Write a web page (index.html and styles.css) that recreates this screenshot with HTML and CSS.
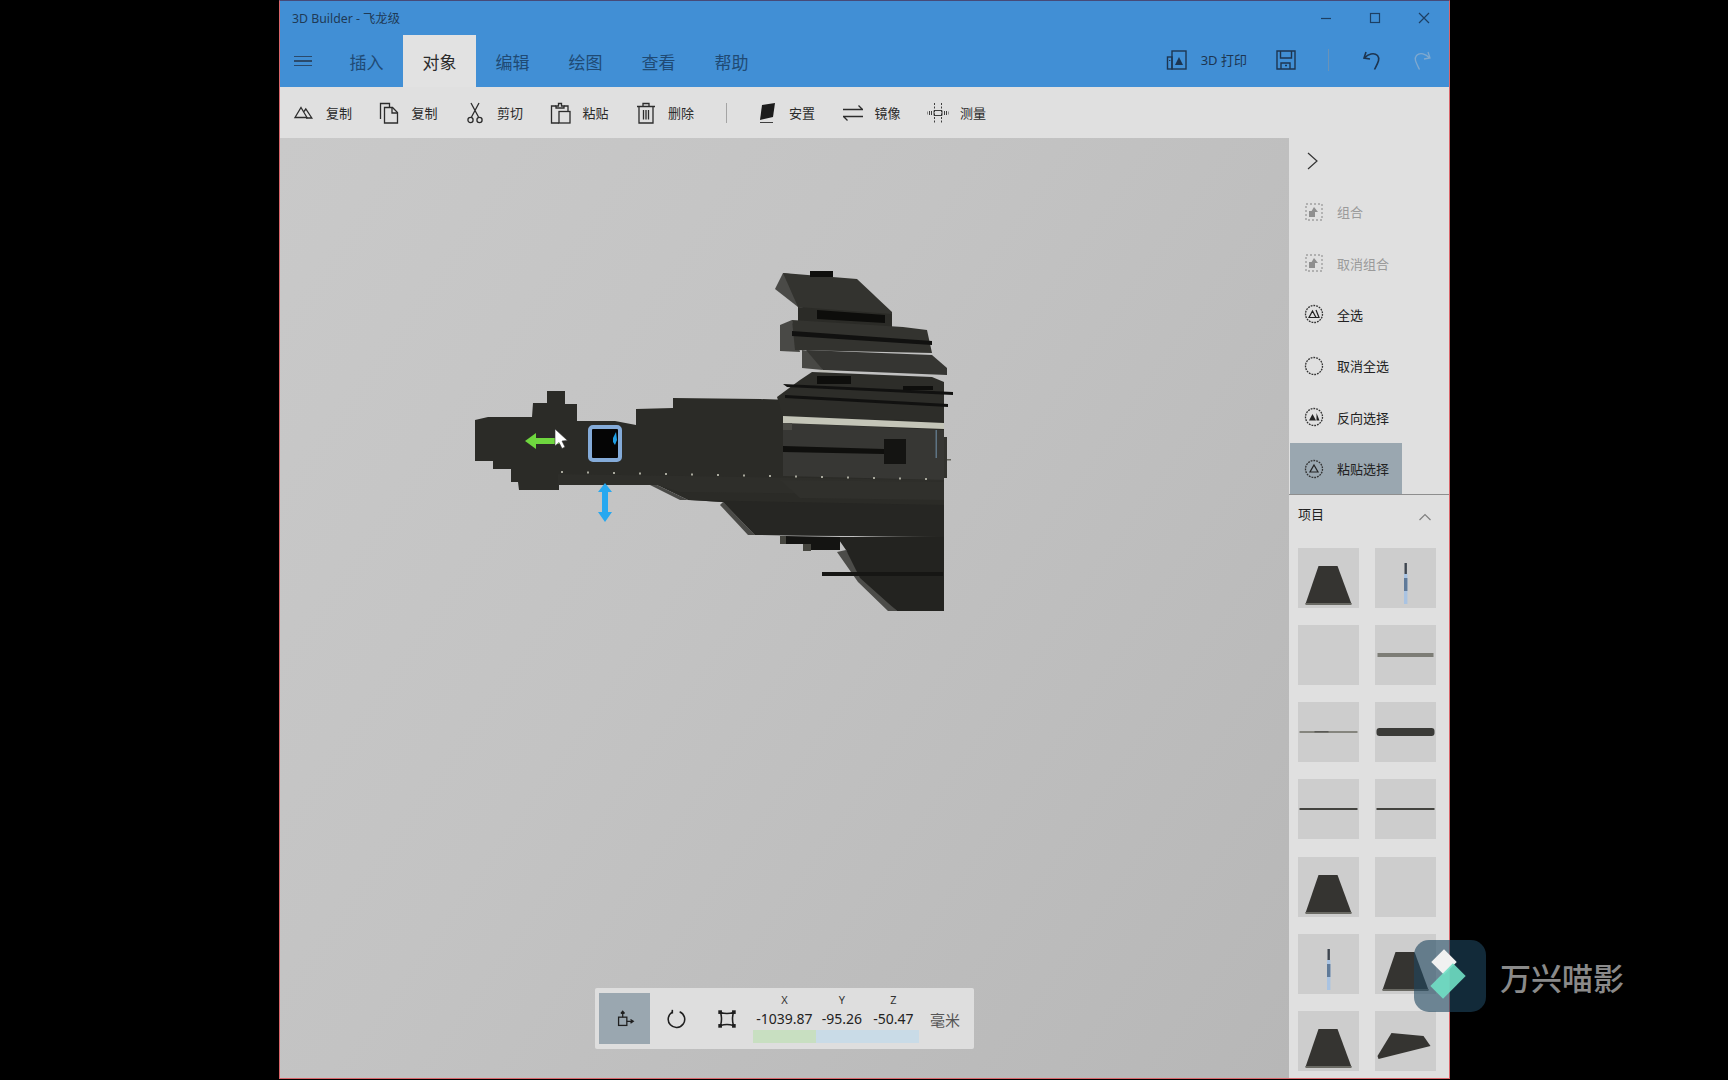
FILE: index.html
```
<!DOCTYPE html>
<html lang="zh-CN">
<head>
<meta charset="utf-8">
<title>3D Builder - 飞龙级</title>
<link rel="stylesheet" href="styles.css">
</head>
<body>
<svg class="defs" width="0" height="0" aria-hidden="true">
  <symbol id="trap" viewBox="0 0 60 60"><polygon points="20,18 39,18 53,56 7,56" fill="#353431"/><rect x="7" y="55" width="46" height="2" fill="#6a6a64"/></symbol>
  <symbol id="needle" viewBox="0 0 60 60"><rect x="29" y="15" width="2.4" height="11" fill="#3f4650"/><rect x="28.5" y="26" width="3.4" height="30" fill="#a9c3e2"/><rect x="28.5" y="30" width="3.4" height="13" fill="#5f7a99"/></symbol>
  <symbol id="bar" viewBox="0 0 60 60"><rect x="2" y="28" width="56" height="4" fill="#7d7d76"/></symbol>
  <symbol id="thin" viewBox="0 0 60 60"><rect x="1" y="29" width="58" height="2" fill="#85857e"/><rect x="16" y="29" width="14" height="1.5" fill="#5a5a56"/></symbol>
  <symbol id="thick" viewBox="0 0 60 60"><rect x="1" y="26" width="58" height="8" rx="3" fill="#3b3b38"/></symbol>
  <symbol id="line" viewBox="0 0 60 60"><rect x="1" y="29" width="58" height="2" fill="#43433f"/></symbol>
  <symbol id="wedge" viewBox="0 0 60 60"><polygon points="16,22 48,25 55,35 3,48 2,45" fill="#353431"/></symbol>
  <symbol id="selmark" viewBox="0 0 22 22"><circle cx="11" cy="11" r="8.5" fill="none" stroke="#333" stroke-width="1.3" stroke-dasharray="1.8 1"/></symbol>
  <symbol id="groupmark" viewBox="0 0 22 22"><rect x="3" y="3" width="16" height="16" fill="none" stroke="#a0a0a0" stroke-width="1.4" stroke-dasharray="2 2"/><rect x="6" y="10" width="6" height="6" fill="#8f8f8f"/><polygon points="11,6 15,11 8,11" fill="#8f8f8f"/></symbol>
</svg>

<div class="window">
  <header class="appbar">
    <div class="titlerow">
      <span class="title">3D Builder - 飞龙级</span>
      <div class="winctl">
        <svg viewBox="0 0 14 14" class="wc"><path d="M2 7.500h10"/></svg>
        <svg viewBox="0 0 14 14" class="wc"><rect x="2.500" y="2.500" width="9" height="9"/></svg>
        <svg viewBox="0 0 14 14" class="wc"><path d="M2 2l10 10M12 2L2 12"/></svg>
      </div>
    </div>
    <div class="tabrow">
      <button class="burger" aria-label="菜单"><span></span><span></span><span></span></button>
      <nav class="tabs">
        <a class="tab">插入</a>
        <a class="tab active">对象</a>
        <a class="tab">编辑</a>
        <a class="tab">绘图</a>
        <a class="tab">查看</a>
        <a class="tab">帮助</a>
      </nav>
      <div class="appactions">
        <svg class="aicon" viewBox="0 0 22 22"><rect x="6" y="2" width="14" height="18"/><rect x="1.500" y="8" width="4.500" height="12"/><polygon class="solid" points="13,8 17,16 9,16"/><path d="M3.700 11v1"/></svg>
        <span class="printlabel">3D 打印</span>
        <svg class="aicon save" viewBox="0 0 22 22"><path d="M2 2h18v18H2zM5.500 2v7h11V2M6 20v-6h9v6M10 16.500h2"/></svg>
        <i class="vsep"></i>
        <svg class="aicon undo" viewBox="0 0 22 22"><path d="M5 3L3 9l6 1M3.500 9C7 5 13 3 16.500 6.500c3 3.500 0 8-3 14"/></svg>
        <svg class="aicon redo" viewBox="0 0 22 22"><path d="M17 3l2 6-6 1M18.500 9C15 5 9 3 5.500 6.500c-3 3.500 0 8 3 14"/></svg>
      </div>
    </div>
  </header>

  <div class="ribbon">
    <div class="rbtn"><svg class="ico" viewBox="0 0 22 22"><path d="M8 5.500l6 10H2z"/><path d="M11 9.500l1.800-2.500 6 9H13"/></svg><span>复制</span></div>
    <div class="rbtn"><svg class="ico" viewBox="0 0 22 22"><path d="M1.500 17V1.500h9V5"/><path d="M5.500 5.500h8l5 5v10.500h-13z"/><path d="M13 6v5h5"/></svg><span>复制</span></div>
    <div class="rbtn"><svg class="ico" viewBox="0 0 22 22"><path d="M7 1l7.500 14M15 1L7.500 15"/><circle cx="6.500" cy="18" r="2.600"/><circle cx="15.500" cy="18" r="2.600"/></svg><span>剪切</span></div>
    <div class="rbtn"><svg class="ico" viewBox="0 0 22 22"><path d="M6 4H1.500v17H9"/><path d="M14 4h4v5"/><path d="M6 6V4h2.500V1.500h3V4H14v2z"/><rect x="9" y="9.500" width="11" height="11.500"/></svg><span>粘贴</span></div>
    <div class="rbtn"><svg class="ico" viewBox="0 0 22 22"><path d="M2 4.500h18M8 4.500V1.500h6v3M4 4.500V21h14V4.500M8.500 8v9.500M11 8v9.500M13.500 8v9.500"/></svg><span>删除</span></div>
    <i class="rsep"></i>
    <div class="rbtn"><svg class="ico" viewBox="0 0 22 22"><polygon class="solid" points="6,3 19,1 17,15 4,18"/><path d="M4 20.500h13" class="thin"/></svg><span>安置</span></div>
    <div class="rbtn"><svg class="ico" viewBox="0 0 22 22"><path d="M1 7.500h20M16.500 3.500l4 4M1 14.500h20M5.500 18.500l-4-4"/></svg><span>镜像</span></div>
    <div class="rbtn"><svg class="ico" viewBox="0 0 22 22"><path class="thin" d="M7.500 1v20M14.500 1v20" stroke-dasharray="2 1.500"/><path d="M7 8.500h8v5H7zM0 9.500v3M2.500 9v4M4.500 9v4M17.500 9v4M19.500 9v4M22 9.500v3" class="thin"/></svg><span>测量</span></div>
  </div>

  <main class="workspace">
    <section class="viewport">
      <svg class="model" viewBox="280 138 1009 940" aria-label="3D 模型">
        <!-- hull -->
        <polygon fill="#2b2b27" points="475,420 488,417 532,417 533,403 547,403 547,391 565,391 565,404 577,404 577,421 615,421 636,425 636,409 673,408 673,398 760,399 790,400 944,417 944,537 755,535 723,502 688,500 657,485 559,485 559,490 519,490 518,482 511,482 511,469 493,469 493,461 475,461"/>
        <polygon fill="#2e2e2a" points="558,474 944,480 944,495 680,492 657,485 558,485"/>
        <polygon fill="#262623" points="690,500 944,505 944,537 755,535 723,502"/>
        <polygon fill="#373734" points="783,423 944,430 944,480 783,476"/>
        <polygon fill="#30302c" points="780,480 944,482 944,500 800,498"/>
        <polygon fill="#4a4a47" points="723,502 755,535 748,535 720,505"/>
        <polygon fill="#4a4a47" points="657,485 688,500 680,500 650,485"/>
        <!-- lower wing -->
        <polygon fill="#4c4c49" points="837,552 846,550 866,578 897,611 888,611 858,582"/>
        <polygon fill="#232320" points="837,537 944,537 944,611 897,611 860,578 846,550"/>
        <polygon fill="#141412" points="785,536 840,537 840,550 811,550 811,544 785,544"/>
        <rect x="780" y="536" width="6" height="8" fill="#45453f"/>
        <rect x="803" y="544" width="8" height="7" fill="#45453f"/>
        <rect x="822" y="572" width="121" height="4" fill="#161614"/>
        <!-- superstructure -->
        <polygon fill="#4a4a47" points="775,289 783,273 798,275 798,307"/>
        <polygon fill="#33332f" points="783,273 857,279 892,312 892,325 798,307"/>
        <rect x="810" y="271" width="23" height="6" fill="#0f0f0d"/>
        <polygon fill="#2b2b27" points="798,307 892,314 892,328 798,324"/>
        <polygon fill="#0d0d0b" points="817,310 885,315 885,323 817,319"/>
        <polygon fill="#494946" points="780,325 792,320 800,352 780,351"/>
        <polygon fill="#33332f" points="792,320 903,327 927,330 932,353 795,350"/>
        <polygon fill="#111110" points="792,331 932,341 932,345 792,336"/>
        <polygon fill="#484845" points="802,350 814,352 823,370 802,368"/>
        <polygon fill="#353532" points="806,350 932,355 947,368 947,375 823,370"/>
        <polygon fill="#bdbdb6" points="820,370 836,371 826,373 818,372"/>
        <polygon fill="#2d2d29" points="800,380 812,372 932,377 944,382 944,421 783,417 777,397"/>
        <rect x="817" y="376" width="34" height="8" fill="#0e0e0c"/>
        <rect x="903" y="386" width="30" height="4" fill="#0e0e0c"/>
        <polygon fill="#111110" points="783,384 953,392 953,395 787,387"/>
        <polygon fill="#111110" points="785,395 948,404 948,407 785,398"/>
        <polygon fill="#c4c5b8" points="783,416 944,423 944,429 783,423"/>
        <polygon fill="#4a4a45" points="783,423 792,423 792,430 783,430"/>
        <polygon fill="#0f0f0d" points="783,446 884,449 884,454 783,452"/>
        <rect x="884" y="439" width="22" height="25" fill="#141412"/>
        <rect x="944" y="437" width="3" height="41" fill="#33332f"/>
        <rect x="947" y="459" width="4" height="1.500" fill="#66665f"/>
        <rect x="935.500" y="430" width="1.500" height="28" fill="#5e7484"/>
        <!-- rivets -->
        <g fill="#a8a89c">
          <rect x="561" y="471" width="2" height="2"/><rect x="587" y="471.500" width="2" height="2"/><rect x="613" y="472" width="2" height="2"/><rect x="639" y="472.500" width="2" height="2"/><rect x="665" y="473" width="2" height="2"/><rect x="691" y="473.500" width="2" height="2"/><rect x="717" y="474" width="2" height="2"/><rect x="743" y="474.500" width="2" height="2"/><rect x="769" y="475" width="2" height="2"/><rect x="795" y="475.500" width="2" height="2"/><rect x="821" y="476" width="2" height="2"/><rect x="847" y="476.500" width="2" height="2"/><rect x="873" y="477" width="2" height="2"/><rect x="899" y="477.500" width="2" height="2"/><rect x="925" y="478" width="2" height="2"/>
        </g>
        <!-- selection handle -->
        <rect x="590" y="427" width="30" height="33" rx="3" fill="#050505" stroke="#84abd9" stroke-width="4"/>
        <path d="M613 438l3-6 1 8-2 5-2-3z" fill="#1f9fe6"/>
        <!-- gizmo arrows -->
        <path d="M525 441l11-8v5h24v6h-24v5z" fill="#6fd63f"/>
        <path d="M605 483l7 9h-4v20h4l-7 10-7-10h4v-20h-4z" fill="#27a8f0"/>
        <!-- cursor -->
        <path d="M555 429l0 17 4-3.500 3 6 3-1.500-3-6 5.500-.5z" fill="#fff" stroke="#333" stroke-width=".6"/>
      </svg>

      <div class="nudge">
        <button class="nbtn on"><svg class="nico" viewBox="0 0 24 24"><rect x="5" y="10" width="9" height="9"/><path d="M9.500 10V4M7.500 6l2-2.500 2 2.500M14 14.500h6M18 12.500l3 2-3 2" /></svg></button>
        <button class="nbtn"><svg class="nico big" viewBox="0 0 24 24"><path d="M8 4.500a9 9 0 1 0 8 -.5"/><path d="M8 2v4"/></svg></button>
        <button class="nbtn"><svg class="nico big" viewBox="0 0 24 24"><path d="M5 5q7 2 14 0q-2 7 0 14q-7-2-14 0q2-7 0-14z"/><rect class="solid" x="2.500" y="2.500" width="4" height="4"/><rect class="solid" x="17.500" y="2.500" width="4" height="4"/><rect class="solid" x="2.500" y="17.500" width="4" height="4"/><rect class="solid" x="17.500" y="17.500" width="4" height="4"/></svg></button>
        <div class="coords">
          <div class="coord cx"><label>X</label><output>-1039.87</output><i></i></div>
          <div class="coord cy"><label>Y</label><output>-95.26</output><i></i></div>
          <div class="coord cz"><label>Z</label><output>-50.47</output><i></i></div>
        </div>
        <span class="unit">毫米</span>
      </div>
    </section>

    <aside class="side">
      <div class="sidetools">
        <svg class="collapse" viewBox="0 0 14 20"><path d="M2 2l9 8-9 8"/></svg>
        <div class="sitem dim"><svg class="sico"><use href="#groupmark"/></svg><span>组合</span></div>
        <div class="sitem dim"><svg class="sico"><use href="#groupmark"/></svg><span>取消组合</span></div>
        <div class="sitem"><svg class="sico" viewBox="0 0 22 22"><use href="#selmark" width="22" height="22"/><path class="mk" d="M9.500 8l3.500 6.500H6zM13 7l3 7.500h-3"/></svg><span>全选</span></div>
        <div class="sitem"><svg class="sico" viewBox="0 0 22 22"><use href="#selmark" width="22" height="22"/></svg><span>取消全选</span></div>
        <div class="sitem"><svg class="sico" viewBox="0 0 22 22"><use href="#selmark" width="22" height="22"/><path class="mkfill" d="M9.500 8l3.500 6.500H6zM13.500 7l3 7.500h-3z"/></svg><span>反向选择</span></div>
        <div class="sitem sel"><svg class="sico" viewBox="0 0 22 22"><use href="#selmark" width="22" height="22"/><path class="mk" d="M11 7l4 7H7z"/></svg><span>粘贴选择</span></div>
      </div>
      <div class="itemshead"><span>项目</span><svg class="up" viewBox="0 0 14 8"><path d="M1.500 7L7 1.500 12.500 7"/></svg></div>
      <div class="thumbs">
        <div class="thumb"><svg><use href="#trap"/></svg></div>
        <div class="thumb"><svg><use href="#needle"/></svg></div>
        <div class="thumb"></div>
        <div class="thumb"><svg><use href="#bar"/></svg></div>
        <div class="thumb"><svg><use href="#thin"/></svg></div>
        <div class="thumb"><svg><use href="#thick"/></svg></div>
        <div class="thumb"><svg><use href="#line"/></svg></div>
        <div class="thumb"><svg><use href="#line"/></svg></div>
        <div class="thumb"><svg><use href="#trap"/></svg></div>
        <div class="thumb"></div>
        <div class="thumb"><svg><use href="#needle"/></svg></div>
        <div class="thumb"><svg><use href="#trap"/></svg></div>
        <div class="thumb"><svg><use href="#trap"/></svg></div>
        <div class="thumb"><svg><use href="#wedge"/></svg></div>
      </div>
    </aside>
  </main>
</div>

<div class="watermark">
  <div class="wm-logo">
    <i class="wm-white"></i>
    <i class="wm-teal"></i>
  </div>
  <span class="wm-text">万兴喵影</span>
</div>
</body>
</html>
```
FILE: styles.css
```
* { box-sizing: border-box; }
html, body { margin: 0; height: 100%; }
body {
  background: #000;
  overflow: hidden;
  padding-left: 279px;
  font-family: "Noto Sans", "Noto Sans CJK SC", sans-serif;
  color: #222;
  position: relative;
}
.defs { position: absolute; }
.window {
  width: 1171px;
  height: 1079px;
  border: 1px solid #d9656a;
  border-top-color: #464a78;
  display: flex;
  flex-direction: column;
  overflow: hidden;
}
.appbar { background: #418fd5; height: 86px; flex: none; }
.titlerow { height: 34px; display: flex; align-items: center; justify-content: space-between; padding-left: 12px; }
.title { font-size: 12.300px; color: #1f3a55; }
.winctl { display: flex; gap: 35px; padding-right: 18px; }
.wc { width: 14px; height: 14px; fill: none; stroke: #1d3f63; stroke-width: 1.2; }
.tabrow { height: 52px; display: flex; align-items: stretch; }
.burger {
  width: 50px; border: 0; background: none; padding: 0 0 0 14px;
  display: flex; flex-direction: column; justify-content: center; gap: 3.500px;
}
.burger span { display: block; width: 18px; height: 1.200px; background: #2a4a6c; }
.tabs { display: flex; }
.tab {
  width: 73px; display: flex; align-items: center; justify-content: center;
  font-size: 17px; color: #1f4a74;
}
.tab.active { background: #e2e2e2; color: #2b2b2b; }
.appactions { margin-left: auto; display: flex; align-items: center; padding-right: 16px; padding-bottom: 3px; }
.aicon { width: 22px; height: 22px; fill: none; stroke: #1d3550; stroke-width: 1.4; }
.printlabel { font-size: 13px; color: #1d3550; margin: 0 28px 0 13px; }
.vsep { width: 1px; height: 22px; background: #6a93b8; margin: 0 32px 0 31px; }
.undo { margin-right: 28px; stroke-width: 1.6; }
.redo { stroke: #7fa9cf; stroke-width: 1.3; }
.solid { fill: currentColor; stroke: none; }
.aicon .solid { fill: #1d3550; }

.ribbon {
  height: 51px; flex: none; background: #e0e0e0;
  display: flex; align-items: center; gap: 26.500px; padding-left: 13px;
}
.rbtn { display: flex; align-items: center; gap: 11px; font-size: 13px; color: #2a2a2a; width: 59px; white-space: nowrap; }
.ico { width: 22px; height: 22px; flex: none; fill: none; stroke: #2c2c2c; stroke-width: 1.3; color: #1c1c1c; }
.ico .thin { stroke-width: .9; }
.rsep { width: 1px; height: 20px; background: #a4a4a4; margin: 0 2.500px 0 5.500px; }

.workspace { flex: 1; display: flex; min-height: 0; }
.viewport {
  flex: 1; position: relative; overflow: hidden;
  background: linear-gradient(125deg, #c9c9c9 0%, #c3c3c3 42%, #b7b7b7 100%);
}
.model { position: absolute; inset: 0; width: 100%; height: 100%; }
.nudge {
  position: absolute; left: 315px; bottom: 29px; width: 379px; height: 61px;
  background: #dedede; border-radius: 2px; padding: 5px 4px;
  display: flex; align-items: stretch;
}
.nbtn {
  width: 51.300px; flex: none; border: 0; background: none; padding: 0;
  display: flex; align-items: center; justify-content: center;
}
.nbtn.on { background: #9aa7b0; }
.nico { width: 22px; height: 22px; fill: none; stroke: #1f1f1f; stroke-width: 1.4; color: #1f1f1f; }
.nico.big { stroke-width: 1.7; }
.coords { display: flex; margin-left: 0; width: 166px; flex: none; }
.coord { display: flex; flex-direction: column; align-items: center; }
.cx { width: 63px; }
.cy { width: 52px; }
.cz { width: 51px; }
.coord label { font-size: 11px; line-height: 14px; color: #333; }
.coord output { font-size: 14px; line-height: 20px; color: #222; margin-top: 2px; white-space: nowrap; }
.coord i { display: block; width: 100%; height: 13px; margin-top: 1px; }
.cx i { background: #c8dfc1; }
.cy i, .cz i { background: #c9dbe7; }
.unit { font-size: 15px; color: #555; align-self: center; margin-left: 11px; padding-top: 1px; }

.side { width: 160px; flex: none; background: #e0e0e0; display: flex; flex-direction: column; overflow: hidden; }
.sidetools { height: 357px; flex: none; border-bottom: 1px solid #8e8e8e; display: flex; flex-direction: column; }
.collapse { width: 14px; height: 20px; margin: 13px 0 15px 17px; flex: none; fill: none; stroke: #333; stroke-width: 1.2; }
.sitem { height: 51.400px; width: 112px; display: flex; align-items: center; gap: 12px; padding-left: 13px; font-size: 13px; margin-left: 1px; flex: none; }
.sico { width: 22px; height: 22px; flex: none; }
.sitem.dim { color: #9a9a9a; }
.sitem.sel { background: #9aa7b0; }
.mk { fill: none; stroke: #222; stroke-width: 1.2; }
.mkfill { fill: #222; stroke: none; }
.itemshead { height: 41px; flex: none; display: flex; align-items: center; justify-content: space-between; padding: 0 17px 5px 9px; font-size: 13px; }
.up { width: 14px; height: 8px; fill: none; stroke: #808080; stroke-width: 1.2; margin-top: 8px; }
.thumbs { display: grid; grid-template-columns: 61px 61px; column-gap: 16px; row-gap: 17.300px; padding-left: 9px; padding-top: 11.500px; }
.thumb { height: 60px; background: #cdcdcd; }
.thumb svg { display: block; width: 100%; height: 100%; }

.watermark { position: absolute; left: 1414px; top: 940px; display: flex; align-items: center; gap: 14px; }
.wm-logo { width: 72px; height: 72px; border-radius: 15px; background: rgba(30, 70, 95, .6); position: relative; flex: none; }
.wm-white { position: absolute; left: 21px; top: 13px; width: 18px; height: 18px; background: #f1f1f1; transform: rotate(45deg); }
.wm-teal { position: absolute; left: 18px; top: 32px; width: 32px; height: 18px; background: rgba(112, 223, 196, .9); transform: rotate(-45deg); }
.wm-text { font-family: "Noto Sans CJK SC", sans-serif; font-size: 31px; color: #8a8a8a; font-weight: 500; line-height: 1; }
```
